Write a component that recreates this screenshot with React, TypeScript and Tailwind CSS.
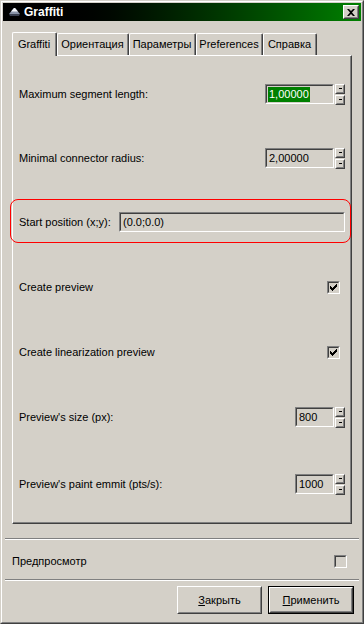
import React from 'react';

const FONT = { fontFamily: '"Liberation Sans", Arial, sans-serif' };

const Sunken: React.FC<{ className?: string; children?: React.ReactNode }> = ({ className = '', children }) => (
  <div className={`border border-t-[#808080] border-l-[#808080] border-b-white border-r-white ${className}`}>
    <div className="h-full w-full border border-t-[#404040] border-l-[#404040] border-b-[#d4d0c8] border-r-[#d4d0c8] bg-[#d4d0c8] flex items-center">
      {children}
    </div>
  </div>
);

const SpinBtn: React.FC = () => (
  <div className="w-[10px] h-[10px] border border-t-white border-l-white border-b-[#404040] border-r-[#404040] bg-[#d4d0c8]">
    <div className="h-full w-full border border-t-[#d4d0c8] border-l-[#d4d0c8] border-b-[#808080] border-r-[#808080] flex items-center justify-center">
      <div className="w-[3px] h-[1px] bg-black" />
    </div>
  </div>
);

const Spin: React.FC<{ value: string; width: string; selected?: boolean }> = ({ value, width, selected }) => (
  <div className="flex items-center">
    <Sunken className={`${width} h-[20px]`}>
      <span className={`ml-[1px] px-[1px] leading-[15px] ${selected ? 'bg-[#008000] text-white' : 'text-black'}`}>{value}</span>
    </Sunken>
    <div className="flex flex-col gap-[1px] ml-[1px]">
      <SpinBtn />
      <SpinBtn />
    </div>
  </div>
);

// classic 7x7 tick, pixel rows
const TICK = ['......#', '.....##', '#...###', '##.###.', '#####..', '.###...', '..#....'];

const Check: React.FC<{ checked?: boolean }> = ({ checked }) => (
  <Sunken className="w-[13px] h-[13px]">
    {checked && (
      <svg width="9" height="9" viewBox="0 0 9 9" shapeRendering="crispEdges">
        {TICK.map((row, y) =>
          row.split('').map((c, x) => (c === '#' ? <rect key={`${x}-${y}`} x={x + 1} y={y + 1} width="1" height="1" fill="#000" /> : null))
        )}
      </svg>
    )}
  </Sunken>
);

const Row: React.FC<{ h: string; children: React.ReactNode; className?: string }> = ({ h, children, className = '' }) => (
  <div className={`${h} flex items-center justify-between ${className}`}>{children}</div>
);

const tabs = [
  { label: 'Graffiti', w: 'w-[45px]' },
  { label: 'Ориентация', w: 'w-[72px]' },
  { label: 'Параметры', w: 'w-[67px]' },
  { label: 'Preferences', w: 'w-[67px]' },
  { label: 'Справка', w: 'w-[54px]' },
];

const Button: React.FC<{ children: React.ReactNode; def?: boolean; w: string }> = ({ children, def, w }) => (
  <div className={`${w} h-[28px] ${def ? 'border border-black' : ''}`}>
    <div className="h-full w-full border border-t-white border-l-white border-b-[#404040] border-r-[#404040]">
      <div className="h-full w-full border border-t-[#d4d0c8] border-l-[#d4d0c8] border-b-[#808080] border-r-[#808080] flex items-center justify-center text-black">
        {children}
      </div>
    </div>
  </div>
);

export default function App() {
  return (
    <div style={FONT} className="w-[364px] h-[624px] text-[11px] text-black border border-t-[#d4d0c8] border-l-[#d4d0c8] border-b-[#404040] border-r-[#404040] bg-[#d4d0c8]">
      <div className="h-full w-full border border-t-white border-l-white border-b-[#808080] border-r-[#808080] p-[1px] flex flex-col">
        {/* title bar */}
        <div className="h-[18px] flex items-center bg-gradient-to-r from-black from-10% to-[#008000] pl-[5px] pr-[2px]">
          <svg width="13" height="10" viewBox="0 0 13 10">
            <path d="M6 1L1 7h11L7 1z" fill="#8a94a8" />
            <path d="M6 1L3 4.5h7L7 1z" fill="#f4f6fa" />
            <path d="M1 7h11l-1 2H2z" fill="#3a4050" />
          </svg>
          <span className="ml-[3px] text-white font-bold text-[12px] leading-none">Graffiti</span>
          <div className="ml-auto w-[16px] h-[14px] border border-t-white border-l-white border-b-[#404040] border-r-[#404040] bg-[#d4d0c8]">
            <div className="h-full w-full border border-t-[#d4d0c8] border-l-[#d4d0c8] border-b-[#808080] border-r-[#808080] flex items-center justify-center">
              <svg width="8" height="7" viewBox="0 0 8 7">
                <path d="M0 0h2l2 2 2-2h2L5 3.5 8 7H6L4 5 2 7H0l3-3.5z" fill="#000" />
              </svg>
            </div>
          </div>
        </div>

        {/* tabs */}
        <div className="mt-[10px] mx-[9px] flex items-end h-[24px] relative z-10">
          {tabs.map((t, i) => (
            <div
              key={t.label}
              className={`${t.w} ${i === 0 ? 'h-[24px] -mb-[1px] bg-[#d4d0c8]' : 'h-[22px]'} border-t border-l border-t-white border-l-white border-r border-r-[#404040] rounded-t-[2px] flex items-center justify-center`}
            >
              <div className={`h-full w-full border-r border-r-[#808080] flex items-center justify-center ${i === 0 ? 'pb-[1px]' : ''}`}>
                {t.label}
              </div>
            </div>
          ))}
        </div>

        {/* panel */}
        <div className="mx-[9px] h-[469px] border-t border-l border-t-white border-l-white border-b border-r border-b-[#404040] border-r-[#404040]">
          <div className="h-full w-full border-b border-r border-b-[#808080] border-r-[#808080] pt-[6px] pl-[6px] pr-[5px] flex flex-col">
            <Row h="h-[64px]">
              <span>Maximum segment length:</span>
              <Spin value="1,00000" width="w-[69px]" selected />
            </Row>
            <Row h="h-[64px]">
              <span>Minimal connector radius:</span>
              <Spin value="2,00000" width="w-[69px]" />
            </Row>
            <Row h="h-[64px]" className="relative">
              <div className="absolute left-[-9px] right-[-6px] top-[9px] h-[44px] border border-[#ff0000] rounded-[8px]" />
              <span>Start position (x;y):</span>
              <Sunken className="w-[226px] h-[20px]">
                <span className="ml-[2px]">(0.0;0.0)</span>
              </Sunken>
            </Row>
            <Row h="h-[66px]" className="pr-[5px]">
              <span>Create preview</span>
              <Check checked />
            </Row>
            <Row h="h-[64px]" className="pr-[5px]">
              <span>Create linearization preview</span>
              <Check checked />
            </Row>
            <Row h="h-[66px]">
              <span>Preview's size (px):</span>
              <Spin value="800" width="w-[39px]" />
            </Row>
            <Row h="h-[68px]">
              <span>Preview's paint emmit (pts/s):</span>
              <Spin value="1000" width="w-[39px]" />
            </Row>
          </div>
        </div>

        {/* separator */}
        <div className="mt-[14px] mx-[2px] border-t border-t-[#808080] border-b border-b-white" />
        <div className="h-[39px] pt-[4px] pl-[9px] pr-[14px] flex items-center justify-between">
          <span>Предпросмотр</span>
          <Check />
        </div>
        <div className="mx-[2px] border-t border-t-[#808080] border-b border-b-white" />

        <div className="mt-[5px] flex justify-end gap-[6px] pr-[7px]">
          <Button w="w-[85px]">
            <span><span className="underline">З</span>акрыть</span>
          </Button>
          <Button w="w-[86px]" def>
            <span><span className="underline">П</span>рименить</span>
          </Button>
        </div>
      </div>
    </div>
  );
}
